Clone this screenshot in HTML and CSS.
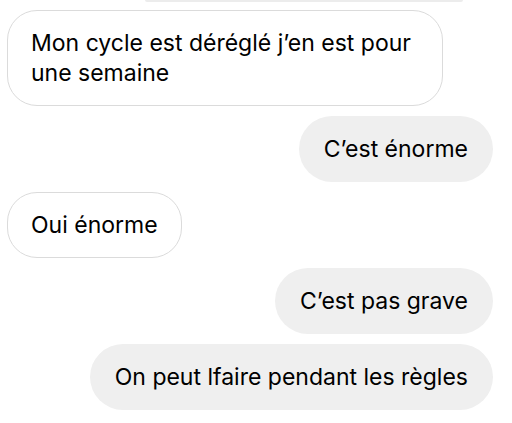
FILE: index.html
```html
<!DOCTYPE html>
<html lang="fr">
<head>
<meta charset="utf-8">
<link rel="stylesheet" href="styles.css">
</head>
<body>
<div class="chat">
  <div class="prev"></div>
  <div class="msg in">Mon cycle est déréglé j’en est pour une semaine</div>
  <div class="msg out">C’est énorme</div>
  <div class="msg in">Oui énorme</div>
  <div class="msg out">C’est pas grave</div>
  <div class="msg out">On peut lfaire pendant les règles</div>
</div>
</body>
</html>
```
FILE: styles.css
```css
html, body {
  margin: 0;
  background: #fff;
}
.chat {
  width: 512px;
  height: 423px;
  box-sizing: border-box;
  padding: 0 19px 0 7px;
  display: flex;
  flex-direction: column;
  gap: 10px;
  overflow: hidden;
  font-family: Inter, "Noto Sans", sans-serif;
  font-size: 23px;
  line-height: 30px;
  color: #000;
}
.prev {
  align-self: flex-end;
  width: 318px;
  height: 2px;
  margin-right: 30px;
  margin-bottom: -2px;
  background: #ececec;
  border-radius: 0 0 2px 2px;
}
.msg {
  box-sizing: border-box;
  max-width: 436px;
  border-radius: 33px;
  padding: 18px 25px;
}
.in {
  align-self: flex-start;
  background: #fff;
  border: 1px solid #dbdbdb;
  padding: 17px 23px;
  border-radius: 30px;
}
.out {
  align-self: flex-end;
  background: #efefef;
}
```
